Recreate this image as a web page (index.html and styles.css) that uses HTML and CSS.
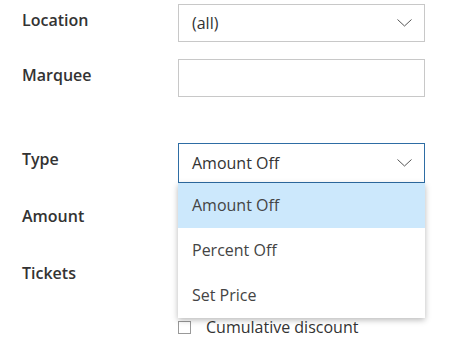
FILE: index.html
```html
<!DOCTYPE html>
<html lang="en">
<head>
    <meta charset="UTF-8">
    <title>Discount</title>
    <link rel="stylesheet" href="styles.css">
</head>
<body>
    <div class="form">
        <div class="form-row">
            <label class="form-label">Location</label>
            <div class="select">
                <span class="select-value">(all)</span>
                <svg class="chevron" width="15" height="8" viewBox="0 0 15 8"><polyline points="0.5,0.5 7.5,7 14.5,0.5" fill="none" stroke="#555" stroke-width="1"/></svg>
            </div>
        </div>

        <div class="form-row">
            <label class="form-label">Marquee</label>
            <div class="input"></div>
        </div>

        <div class="form-row form-row-spaced">
            <label class="form-label">Type</label>
            <div class="select select-open">
                <span class="select-value">Amount Off</span>
                <svg class="chevron" width="15" height="8" viewBox="0 0 15 8"><polyline points="0.5,0.5 7.5,7 14.5,0.5" fill="none" stroke="#555" stroke-width="1"/></svg>

                <ul class="dropdown">
                    <li class="dropdown-item selected">Amount Off</li>
                    <li class="dropdown-item">Percent Off</li>
                    <li class="dropdown-item">Set Price</li>
                </ul>
            </div>
        </div>

        <div class="form-row form-row-wide">
            <label class="form-label">Amount</label>
            <div class="input"></div>
        </div>

        <div class="form-row form-row-wide">
            <label class="form-label">Tickets</label>
            <div class="input"></div>
        </div>

        <div class="check-row">
            <span class="checkbox"></span>
            <span class="check-label">Cumulative discount</span>
        </div>
    </div>
</body>
</html>
```

FILE: styles.css
```css
* {
    box-sizing: border-box;
    margin: 0;
    padding: 0;
}

body {
    background: #fff;
    color: #333;
    font-family: "Open Sans", "Noto Sans", Arial, sans-serif;
    font-size: 16px;
    overflow: hidden;
}

.form {
    padding: 4px 0 0 22px;
}

.form-row {
    display: flex;
    align-items: flex-start;
    margin-bottom: 17px;
}

.form-row-wide {
    margin-bottom: 19px;
}

/* margins collapse, so this is the whole gap above Type */
.form-row-spaced {
    margin-top: 46px;
}

.form-label {
    width: 156px;
    flex-shrink: 0;
    padding-top: 5px;
    font-size: 16px;
    font-weight: 600;
    line-height: 22px;
    color: #333;
}

.select,
.input {
    position: relative;
    width: 247px;
    height: 38px;
    border: 1px solid #c8c8c8;
    background: #fff;
}

.select {
    display: flex;
    align-items: center;
    justify-content: space-between;
    padding: 0 12px 0 13px;
}

.select-value {
    line-height: 22px;
    color: #333;
}

.chevron {
    display: block;
}

.select-open {
    border-color: #2e6da4;
    height: 40px;
}

.dropdown {
    position: absolute;
    top: 100%;
    left: -1px;
    width: 247px;
    margin-top: 1px;
    list-style: none;
    background: #fff;
    box-shadow: 0 2px 6px rgba(0, 0, 0, 0.28);
    z-index: 10;
}

.dropdown-item {
    height: 45px;
    padding-left: 14px;
    line-height: 45px;
    color: #444;
}

.dropdown-item.selected {
    background: #cce8fc;
}

.check-row {
    display: flex;
    align-items: center;
    gap: 15px;
    margin-left: 156px;
    margin-top: 21px;
}

.checkbox {
    width: 13px;
    height: 13px;
    border: 1px solid #999;
    background: #fff;
}

.check-label {
    line-height: 22px;
    color: #333;
}
```
